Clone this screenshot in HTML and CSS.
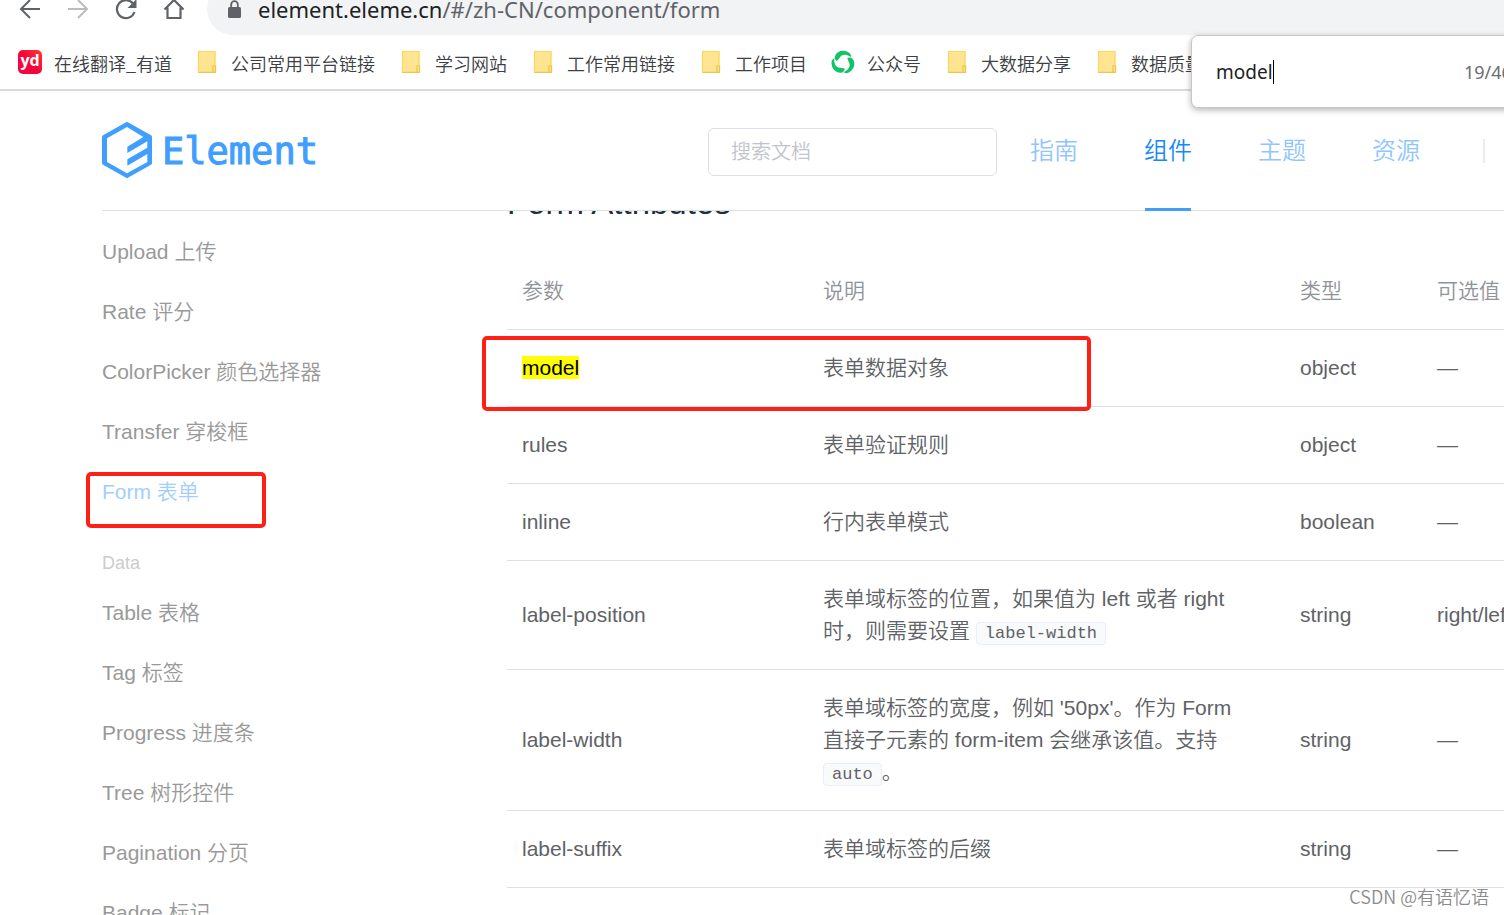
FILE: index.html
```html
<!DOCTYPE html>
<html lang="zh-CN">
<head>
<meta charset="utf-8">
<title>Element - Form 表单</title>
<link rel="stylesheet" href="styles.css">
</head>
<body>
<svg class="defs" aria-hidden="true">
  <symbol id="folder" viewBox="0 0 24 24">
    <path d="M3 1.500h17.500V23H3z" fill="#ffe592"/>
    <path d="M3.500 23V1.500H20V15" fill="none" stroke="#fbd75c" stroke-width="1.200"/>
    <path d="M3.500 22.400h17v-6.500h-2.500v6" fill="none" stroke="#ecc84a" stroke-width="1.300"/>
  </symbol>
</svg>
<div class="window">
  <div class="toolbar">
    <button class="tool" aria-label="后退"><svg viewBox="0 0 24 24"><path d="M22 12H3M12 3l-9 9 9 9" fill="none" stroke="#5f6368" stroke-width="2"/></svg></button>
    <button class="tool" aria-label="前进"><svg viewBox="0 0 24 24"><path d="M2 12h19M12 3l9 9-9 9" fill="none" stroke="#babcbe" stroke-width="2"/></svg></button>
    <button class="tool" aria-label="刷新"><svg viewBox="0 0 24 24"><path d="M20.500 15A9 9 0 1 1 19 6.500" fill="none" stroke="#5f6368" stroke-width="2.200"/><path d="M22.500 2v9h-9z" fill="#5f6368"/></svg></button>
    <button class="tool" aria-label="主页"><svg viewBox="0 0 24 24"><path d="M2.500 12.500 12 3l9.500 9.500M5.500 10.500v10.500h13V10.500" fill="none" stroke="#5f6368" stroke-width="2.200"/></svg></button>
    <div class="omnibox">
      <svg class="lock" viewBox="0 0 13 18"><path d="M3.200 8V4.500a3.300 3.300 0 0 1 6.600 0V8" fill="none" stroke="#5f6368" stroke-width="1.800"/><rect x="0" y="7" width="13" height="11" rx="1.500" fill="#5f6368"/></svg>
      <div class="url"><span class="host">element.eleme.cn</span>/#/zh-CN/component/form</div>
    </div>
  </div>

  <nav class="bookmarks" aria-label="书签">
    <a class="bookmark" href="#"><span class="yd">yd</span>在线翻译_有道</a>
    <a class="bookmark" href="#"><svg><use href="#folder"/></svg>公司常用平台链接</a>
    <a class="bookmark" href="#"><svg><use href="#folder"/></svg>学习网站</a>
    <a class="bookmark" href="#"><svg><use href="#folder"/></svg>工作常用链接</a>
    <a class="bookmark" href="#"><svg><use href="#folder"/></svg>工作项目</a>
    <a class="bookmark" href="#"><svg viewBox="0 0 24 24"><g fill="#12c468"><path id="blade" d="M4 6C7-.5 15-.5 19.500 4l1 3.500C16 4 11 3.500 8.500 8L6 11C4 10 3.500 8 4 6z"/><use href="#blade" transform="rotate(120 12 12.500)"/><use href="#blade" transform="rotate(240 12 12.500)"/></g></svg>公众号</a>
    <a class="bookmark" href="#"><svg><use href="#folder"/></svg>大数据分享</a>
    <a class="bookmark" href="#"><svg><use href="#folder"/></svg>数据质量</a>
  </nav>

  <form class="findbar">
    <div class="find-field"><input class="find-input" type="text" value="model" size="5" aria-label="在页面中查找"><span class="caret"></span></div>
    <span class="find-count">19/46</span>
  </form>

  <header class="header">
    <a class="logo" href="#" aria-label="Element">
      <svg class="logo-mark" viewBox="0 0 150 172"><path fill="#409eff" fill-rule="evenodd" d="M75 1 147 42Q150 44 150 47V125Q150 128 147 130L75 171 3 130Q0 128 0 125V47Q0 44 3 42ZM75 17 15 51V122L75 156 136 122V98L76 133V114L136 79V60L76 95V76L124 47Z"/></svg>
      <span class="logo-text">Element</span>
    </a>
    <input class="search" type="text" placeholder="搜索文档" aria-label="搜索文档">
    <nav class="nav">
      <a class="nav-link" href="#">指南</a>
      <a class="nav-link active" href="#">组件</a>
      <a class="nav-link" href="#">主题</a>
      <a class="nav-link" href="#">资源</a>
    </nav>
    <span class="divider"></span>
  </header>

  <div class="main">
    <ul class="sidebar">
      <li><a href="#">Upload 上传</a></li>
      <li><a href="#">Rate 评分</a></li>
      <li><a href="#">ColorPicker 颜色选择器</a></li>
      <li><a href="#">Transfer 穿梭框</a></li>
      <li class="current"><a href="#">Form 表单</a><span class="mark mark-side"></span></li>
      <li class="group">Data</li>
      <li><a href="#">Table 表格</a></li>
      <li><a href="#">Tag 标签</a></li>
      <li><a href="#">Progress 进度条</a></li>
      <li><a href="#">Tree 树形控件</a></li>
      <li><a href="#">Pagination 分页</a></li>
      <li><a href="#">Badge 标记</a></li>
    </ul>
    <section class="content">
      <h3 class="title">Form Attributes</h3>
      <div class="table-wrap">
        <table class="attrs">
          <colgroup><col class="c-name"><col class="c-desc"><col class="c-type"><col></colgroup>
          <thead><tr><th>参数</th><th>说明</th><th>类型</th><th>可选值</th></tr></thead>
          <tbody>
            <tr><td><mark>model</mark></td><td>表单数据对象</td><td>object</td><td>—</td></tr>
            <tr><td>rules</td><td>表单验证规则</td><td>object</td><td>—</td></tr>
            <tr><td>inline</td><td>行内表单模式</td><td>boolean</td><td>—</td></tr>
            <tr><td>label-position</td><td>表单域标签的位置，如果值为 left 或者 right 时，则需要设置 <code>label-width</code></td><td>string</td><td>right/left/top</td></tr>
            <tr><td>label-width</td><td>表单域标签的宽度，例如 '50px'。作为 Form 直接子元素的 form-item 会继承该值。支持 <code>auto</code>。</td><td>string</td><td>—</td></tr>
            <tr><td>label-suffix</td><td>表单域标签的后缀</td><td>string</td><td>—</td></tr>
          </tbody>
        </table>
        <span class="mark mark-row"></span>
      </div>
    </section>
  </div>
  <div class="watermark">CSDN @有语忆语</div>
</div>
</body>
</html>
```
FILE: styles.css
```css
* { box-sizing: border-box; }
body {
  margin: 0;
  background: #fff;
  font-family: "Liberation Sans", "Noto Sans CJK SC", sans-serif;
  font-size: 21px;
  font-weight: 350;
  color: #606266;
}
a { color: inherit; text-decoration: none; }
.defs { display: none; }
.window {
  position: relative;
  display: flex;
  flex-direction: column;
  height: 100vh;
  overflow: hidden;
}

/* Browser chrome */
.toolbar {
  flex: none;
  display: flex;
  align-items: center;
  gap: 24px;
  height: 52px;
  margin-top: -17px;
  padding-left: 18px;
}
.tool {
  flex: none;
  width: 24px;
  height: 24px;
  padding: 0;
  border: 0;
  background: none;
}
.tool svg { display: block; width: 24px; height: 24px; }
.omnibox {
  flex: 1;
  display: flex;
  align-items: center;
  gap: 17px;
  height: 52px;
  margin-left: -3px;
  padding-left: 21px;
  border-radius: 26px 0 0 26px;
  background: #f1f3f4;
}
.lock { width: 13px; height: 18px; }
.url {
  font-family: "Noto Sans", sans-serif;
  font-size: 22px;
  font-weight: 400;
  line-height: 30px;
  color: #5f6368;
}
.host { color: #202124; }

.bookmarks {
  flex: none;
  display: flex;
  align-items: center;
  gap: 24px;
  height: 56px;
  padding: 1px 0 0 18px;
  border-bottom: 2px solid #dadada;
}
.bookmark {
  flex: none;
  display: flex;
  align-items: center;
  gap: 12px;
  font-family: "Noto Sans CJK SC", sans-serif;
  font-size: 18px;
  line-height: 24px;
  white-space: nowrap;
  color: #3c4043;
}
.bookmark svg { width: 24px; height: 24px; margin-top: -1px; }
.bookmark + .bookmark { margin-left: -1px; }
.bookmark + .bookmark ~ .bookmark { margin-left: 0; }
.yd {
  width: 24px;
  height: 24px;
  margin-top: -1px;
  border-radius: 5px;
  background: linear-gradient(45deg, #f5053c 50%, #ff3b30);
  color: #fff;
  font: bold 16px/21px "Open Sans", sans-serif;
  text-align: center;
}

.findbar {
  position: absolute;
  z-index: 3;
  top: 35px;
  right: -87px;
  display: flex;
  align-items: center;
  width: 400px;
  height: 73px;
  padding-left: 24px;
  border: 1px solid #c8c8c8;
  border-radius: 7px;
  background: #fff;
  box-shadow: 0 2px 6px rgba(0, 0, 0, .3);
  font-family: "Noto Sans", sans-serif;
  font-size: 19px;
  font-weight: 400;
}
.find-field { display: flex; align-items: center; width: 248px; }
.find-input {
  field-sizing: content;
  padding: 0;
  border: 0;
  outline: 0;
  background: none;
  font: inherit;
  color: #202124;
}
.caret { width: 1px; height: 24px; background: #000; }
.find-count { font-size: 18px; color: #6b6e73; }

/* Site header */
.header {
  flex: none;
  display: flex;
  align-items: center;
  height: 120px;
  margin-left: 102px;
  padding-right: 19px;
  border-bottom: 1px solid #dcdfe6;
}
.logo {
  display: flex;
  align-items: center;
  gap: 10px;
  margin: 0 auto 2px 0;
  color: #409eff;
}
.logo-mark { width: 50px; height: 58px; }
.logo-text {
  font: 400 37px/44px "DejaVu Sans Mono", monospace;
  -webkit-text-stroke: 1px #409eff;
  padding-top: 4px;
}
.search {
  width: 289px;
  height: 48px;
  margin-top: 2px;
  padding: 2px 22px 0;
  border: 1px solid #dcdfe6;
  border-radius: 6px;
  background: #fff;
  font: inherit;
  font-size: 20px;
}
.search::placeholder { color: #c0c4cc; }
.nav { display: flex; align-self: stretch; }
.nav-link {
  position: relative;
  padding: 0 33px;
  font-size: 24px;
  line-height: 120px;
  color: #90c5ff;
}
.nav-link.active { color: #1989fa; }
.nav-link.active::after {
  content: "";
  position: absolute;
  right: 34px;
  bottom: -1px;
  left: 34px;
  height: 3px;
  background: #409eff;
}
.divider { width: 2px; height: 24px; margin-left: 30px; background: #ebebeb; }

/* Page body */
.main {
  flex: 1;
  min-height: 0;
  display: flex;
  overflow: hidden;
  padding-left: 102px;
}
.sidebar {
  flex: none;
  width: 405px;
  margin: 0;
  padding: 11px 0 0;
  list-style: none;
  line-height: 60px;
  color: #999;
}
.sidebar .current { position: relative; color: #a0cfff; }
.sidebar .group {
  margin-top: 22px;
  font-size: 18px;
  line-height: 39px;
  color: #ccc;
}
.mark {
  position: absolute;
  border: 4px solid #ff2015;
  border-radius: 5px;
}
.mark-side { top: 10px; left: -16px; width: 180px; height: 56px; }
.mark-row { top: 83px; left: -25px; width: 609px; height: 75px; }

.content { flex: 1; min-width: 0; }
.title {
  margin: -28px 0 30px;
  font-size: 33px;
  font-weight: 400;
  line-height: 40px;
  color: #1f2f3d;
}
.table-wrap { position: relative; }
.attrs {
  width: 100%;
  table-layout: fixed;
  border-collapse: collapse;
  line-height: 32px;
}
.attrs th,
.attrs td {
  padding: 22px 0 22px 15px;
  border-bottom: 1px solid #dcdfe6;
  text-align: left;
  font-weight: 350;
  white-space: nowrap;
}
.attrs th { color: #909399; }
.attrs td:nth-child(2) { padding-right: 48px; white-space: normal; }
.c-name { width: 301px; }
.c-desc { width: 477px; }
.c-type { width: 137px; }
mark { background: #ff0; color: #000; }
code {
  padding: 1px 8px;
  border: 1px solid #eaeefb;
  border-radius: 4px;
  background: #f9fafc;
  font-family: "Liberation Mono", monospace;
  font-size: 17px;
  line-height: 1;
}
.watermark {
  position: absolute;
  right: 15px;
  bottom: 6px;
  font-family: "Noto Sans CJK SC", sans-serif;
  font-size: 18px;
  line-height: 26px;
  color: #8c8c8c;
}
```
